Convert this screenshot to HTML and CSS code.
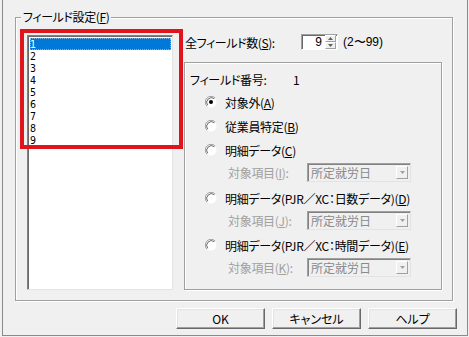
FILE: index.html
```html
<!DOCTYPE html>
<html lang="ja">
<head>
<meta charset="utf-8">
<link rel="stylesheet" href="styles.css">
</head>
<body>
<div class="dialog">
  <div class="group">
    <span class="group-label">フィールド設定(<u>F</u>)</span>
    <div class="group-body">
      <div class="listbox">
        <div class="item selected">1</div>
        <div class="item">2</div>
        <div class="item">3</div>
        <div class="item">4</div>
        <div class="item">5</div>
        <div class="item">6</div>
        <div class="item">7</div>
        <div class="item">8</div>
        <div class="item">9</div>
      </div>
      <div class="right">
        <div class="count-row">
          <span class="count-label">全フィールド数(<u>S</u>):</span>
          <div class="spin">
            <span class="spin-value">9</span>
            <span class="spin-btns">
              <span class="spin-btn"><svg width="5" height="3" viewBox="0 0 5 3"><path d="M0 3 L2.5 0 L5 3 Z" fill="#606060"/></svg></span>
              <span class="spin-btn"><svg width="5" height="3" viewBox="0 0 5 3"><path d="M0 0 L2.5 3 L5 0 Z" fill="#606060"/></svg></span>
            </span>
          </div>
          <span class="range">(2〜99)</span>
        </div>
        <div class="panel">
          <div class="num-row"><span class="num-label">フィールド番号:</span><span>1</span></div>
          <div class="radio-row">
            <svg class="radio" width="12" height="12" viewBox="0 0 12 12"><circle cx="6" cy="6" r="5.5" fill="#fff"/><path d="M1.9 10.1 A5.8 5.8 0 0 1 10.1 1.9" stroke="#a0a0a0" fill="none"/><path d="M2.7 9.3 A4.7 4.7 0 0 1 9.3 2.7" stroke="#696969" fill="none"/><circle cx="6" cy="6" r="2" fill="#000"/></svg>
            <span>対象外(<u>A</u>)</span>
          </div>
          <div class="radio-row">
            <svg class="radio" width="12" height="12" viewBox="0 0 12 12"><circle cx="6" cy="6" r="5.5" fill="#fff"/><path d="M1.9 10.1 A5.8 5.8 0 0 1 10.1 1.9" stroke="#a0a0a0" fill="none"/><path d="M2.7 9.3 A4.7 4.7 0 0 1 9.3 2.7" stroke="#696969" fill="none"/></svg>
            <span>従業員特定(<u>B</u>)</span>
          </div>
          <div class="radio-row">
            <svg class="radio" width="12" height="12" viewBox="0 0 12 12"><circle cx="6" cy="6" r="5.5" fill="#fff"/><path d="M1.9 10.1 A5.8 5.8 0 0 1 10.1 1.9" stroke="#a0a0a0" fill="none"/><path d="M2.7 9.3 A4.7 4.7 0 0 1 9.3 2.7" stroke="#696969" fill="none"/></svg>
            <span>明細データ(<u>C</u>)</span>
          </div>
          <div class="sub-row">
            <span class="sub-label">対象項目(<u>I</u>):</span>
            <div class="combo"><span class="combo-text">所定就労日</span><span class="combo-btn"><svg width="5" height="3" viewBox="0 0 5 3"><path d="M0 0 L2.5 3 L5 0 Z" fill="#a0a0a0"/></svg></span></div>
          </div>
          <div class="radio-row gap">
            <svg class="radio" width="12" height="12" viewBox="0 0 12 12"><circle cx="6" cy="6" r="5.5" fill="#fff"/><path d="M1.9 10.1 A5.8 5.8 0 0 1 10.1 1.9" stroke="#a0a0a0" fill="none"/><path d="M2.7 9.3 A4.7 4.7 0 0 1 9.3 2.7" stroke="#696969" fill="none"/></svg>
            <span>明細データ(PJR／XC：日数データ)(<u>D</u>)</span>
          </div>
          <div class="sub-row">
            <span class="sub-label">対象項目(<u>J</u>):</span>
            <div class="combo"><span class="combo-text">所定就労日</span><span class="combo-btn"><svg width="5" height="3" viewBox="0 0 5 3"><path d="M0 0 L2.5 3 L5 0 Z" fill="#a0a0a0"/></svg></span></div>
          </div>
          <div class="radio-row gap2">
            <svg class="radio" width="12" height="12" viewBox="0 0 12 12"><circle cx="6" cy="6" r="5.5" fill="#fff"/><path d="M1.9 10.1 A5.8 5.8 0 0 1 10.1 1.9" stroke="#a0a0a0" fill="none"/><path d="M2.7 9.3 A4.7 4.7 0 0 1 9.3 2.7" stroke="#696969" fill="none"/></svg>
            <span>明細データ(PJR／XC：時間データ)(<u>E</u>)</span>
          </div>
          <div class="sub-row">
            <span class="sub-label">対象項目(<u>K</u>):</span>
            <div class="combo"><span class="combo-text">所定就労日</span><span class="combo-btn"><svg width="5" height="3" viewBox="0 0 5 3"><path d="M0 0 L2.5 3 L5 0 Z" fill="#a0a0a0"/></svg></span></div>
          </div>
        </div>
      </div>
    </div>
  </div>
  <div class="buttons">
    <button class="btn">OK</button>
    <button class="btn">キャンセル</button>
    <button class="btn">ヘルプ</button>
  </div>
</div>
<div class="highlight"></div>
</body>
</html>
```

FILE: styles.css
```css
* { box-sizing: border-box; }
html, body {
  margin: 0;
  padding: 0;
  background: #f0f0f0;
}
body {
  font-family: "Noto Sans CJK JP", "Liberation Sans", sans-serif;
  font-size: 12px;
  font-feature-settings: "palt";
  color: #000;
  width: 469px;
  height: 337px;
  overflow: hidden;
  position: relative;
}
u { text-decoration: underline; text-underline-offset: 1px; }

.dialog {
  margin-left: 2px;
  width: 466px;
  height: 336px;
  border: 1px solid #8a8a8a;
  border-top: none;
  display: flex;
  flex-direction: column;
}

.group {
  position: relative;
  margin: 17px 0 0 12px;
  width: 438px;
  height: 284px;
  border: 1px solid #a0a0a0;
  box-shadow: inset 1px 1px 0 #fff, 1px 1px 0 #fff;
}
.group-label {
  position: absolute;
  top: -10px;
  left: 5px;
  padding: 0 2px;
  background: #f0f0f0;
  line-height: 18px;
  letter-spacing: -0.4px;
}
.group-body {
  display: flex;
  gap: 11px;
  padding: 17px 10px 10px 11px;
}

.listbox {
  width: 146px;
  height: 255px;
  background: #fff;
  border: 1px solid;
  border-color: #828282 #e3e3e3 #e3e3e3 #828282;
  box-shadow: inset 1px 1px 0 #696969;
  padding: 2px 1px 0 2px;
  font-family: "DejaVu Sans Condensed", "Liberation Sans", sans-serif;
  font-size: 10.5px;
}
.item {
  height: 12px;
  line-height: 12px;
  overflow: hidden;
}
.item.selected {
  background: #0078d7;
  color: #fff;
  outline: 1px dotted #7fb6e6;
  outline-offset: -1px;
}

.right {
  width: 258px;
  display: flex;
  flex-direction: column;
}
.count-row {
  display: flex;
  align-items: center;
  height: 16px;
  margin-top: -1px;
}
.count-label {
  width: 117px;
  padding-left: 1px;
  letter-spacing: -0.4px;
}
.spin {
  width: 37px;
  height: 16px;
  display: flex;
  align-items: center;
  justify-content: flex-end;
  background: #fff;
  border: 1px solid;
  border-color: #a0a0a0 #fff #fff #a0a0a0;
  box-shadow: inset 1px 1px 0 #696969;
}
.spin-value {
  font-family: "Liberation Sans", sans-serif;
  font-size: 12px;
  line-height: 14px;
  margin-right: 3px;
}
.spin-btns {
  display: flex;
  flex-direction: column;
  width: 11px;
  height: 14px;
  margin-right: 1px;
}
.spin-btn {
  flex: 1;
  display: flex;
  align-items: center;
  justify-content: center;
  background: #f0f0f0;
  border: 1px solid;
  border-color: #fff #a0a0a0 #a0a0a0 #fff;
}
.range {
  margin-left: 5px;
  font-family: "Liberation Sans", sans-serif;
  font-size: 12px;
}

.panel {
  margin-top: 12px;
  height: 228px;
  border: 1px solid #a0a0a0;
  box-shadow: inset 1px 1px 0 #fff, 1px 1px 0 #fff;
  padding: 6px 0 0 0;
  display: flex;
  flex-direction: column;
}
.num-row {
  height: 21px;
  display: flex;
  align-items: center;
  padding-left: 5px;
}
.num-label {
  width: 103px;
  letter-spacing: -0.3px;
}
.radio-row {
  height: 24px;
  display: flex;
  align-items: center;
  padding-left: 20px;
  gap: 8px;
  letter-spacing: -0.3px;
}
.radio-row.gap { margin-top: 4px; }
.radio-row.gap2 { margin-top: 3px; }
.sub-row {
  height: 20px;
  display: flex;
  align-items: center;
  padding-left: 43px;
  color: #a0a0a0;
}
.sub-label {
  width: 79px;
  letter-spacing: -0.3px;
}
.combo {
  width: 104px;
  height: 19px;
  display: flex;
  align-items: center;
  justify-content: space-between;
  background: #f0f0f0;
  border: 1px solid;
  border-color: #a0a0a0 #e3e3e3 #e3e3e3 #a0a0a0;
  box-shadow: inset 1px 1px 0 #828282;
  padding: 0 2px 0 3px;
  color: #8a8a8a;
}
.combo-text { line-height: 15px; }
.combo-btn {
  width: 12px;
  height: 13px;
  display: flex;
  align-items: center;
  justify-content: center;
  border: 1px solid;
  border-color: #fff #a0a0a0 #a0a0a0 #fff;
  background: #f0f0f0;
}

.buttons {
  display: flex;
  justify-content: flex-end;
  gap: 7px;
  margin-top: 7px;
  padding-right: 10px;
}
.btn {
  width: 89px;
  height: 21px;
  font: inherit;
  font-size: 12px;
  font-feature-settings: "palt";
  color: #000;
  background: #f0f0f0;
  border: 1px solid;
  border-color: #fff #696969 #696969 #fff;
  box-shadow: inset -1px -1px 0 #a0a0a0, inset 1px 1px 0 #e3e3e3;
  padding: 0;
  line-height: 17px;
}

.highlight {
  position: absolute;
  left: 20px;
  top: 29px;
  width: 163px;
  height: 120px;
  border: 4px solid #e0141b;
  pointer-events: none;
}
```
